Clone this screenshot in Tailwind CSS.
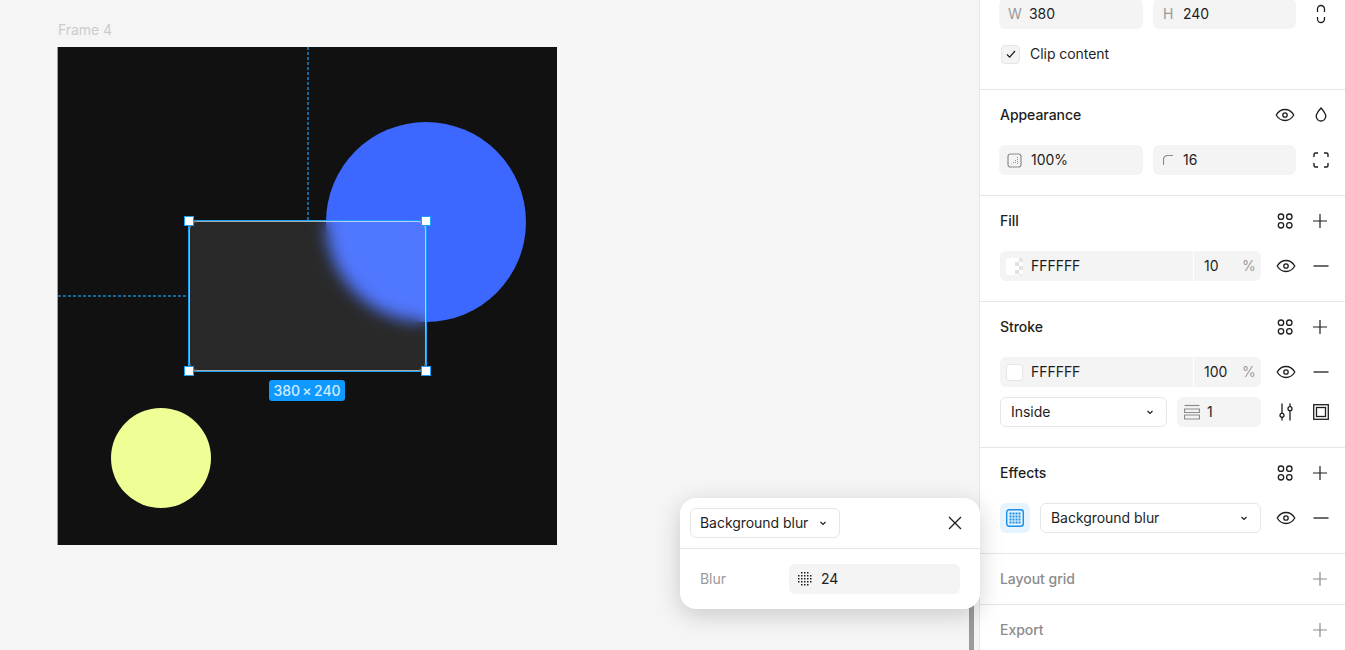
<!DOCTYPE html>
<html lang="en">
<head>
    <meta charset="UTF-8">
    <meta name="viewport" content="width=device-width, initial-scale=1.0">
    <title>Frame 4 - Background blur</title>
    <script src="https://cdn.jsdelivr.net/npm/@tailwindcss/browser@4"></script>
</head>
<body class="font-['Inter',sans-serif] text-[14px] leading-[20px] tracking-[-0.003em] text-[#1e1e1e] bg-[#f5f5f5]">
    <!-- icon sprites -->
    <svg class="hidden">
        <symbol id="eye" viewBox="0 0 20 20"><path d="M1.200 10c2.200-3.700 5.400-5.500 8.800-5.500s6.600 1.800 8.800 5.500c-2.200 3.700-5.400 5.500-8.800 5.500S3.400 13.700 1.200 10Z" fill="none" stroke="currentColor" stroke-width="1.300"/><circle cx="10" cy="10" r="2.200" fill="none" stroke="currentColor" stroke-width="1.300"/></symbol>
        <symbol id="style" viewBox="0 0 20 20"><g fill="none" stroke="currentColor" stroke-width="1.300"><circle cx="6" cy="5.700" r="2.700"/><circle cx="14.300" cy="5.700" r="2.700"/><circle cx="6" cy="14.300" r="2.700"/><circle cx="14.300" cy="14.300" r="2.700"/></g></symbol>
        <symbol id="plus" viewBox="0 0 20 20"><path d="M10 3v14M3 10h14" stroke="currentColor" stroke-width="1.200" fill="none"/></symbol>
        <symbol id="minus" viewBox="0 0 20 20"><path d="M2.500 10h15" stroke="currentColor" stroke-width="1.300" fill="none"/></symbol>
        <symbol id="chevron" viewBox="0 0 10 10"><path d="M2.500 4l2.500 2.500L7.500 4" stroke="currentColor" stroke-width="1.200" fill="none"/></symbol>
    </svg>

    <div class="relative flex w-[1345px] h-[650px] overflow-hidden">
        <!-- canvas -->
        <main class="relative w-[979px] h-full">
            <span class="absolute left-[58px] top-[20px] text-[#cccccc]">Frame 4</span>

            <div class="absolute left-[58px] top-[47px] w-[499px] h-[498px] bg-[#111111] overflow-hidden shadow-[-1px_0_0_#a0a0a0]">
                <div class="absolute left-[268px] top-[75px] w-[200px] h-[200px] rounded-full bg-[#3d68ff]"></div>
                <div class="absolute left-[53px] top-[361px] w-[100px] h-[100px] rounded-full bg-[#efff95]"></div>
                <div class="absolute left-[249px] top-0 w-[2px] h-[174px] bg-[repeating-linear-gradient(to_bottom,#14689f_0_3px,transparent_3px_5px)]"></div>
                <div class="absolute left-0 top-[248px] w-[130px] h-[2px] bg-[repeating-linear-gradient(to_right,#14689f_0_3px,transparent_3px_5px)]"></div>
                <div class="absolute left-[131px] top-[174px] w-[237px] h-[150px] rounded-[8px] bg-white/10 backdrop-blur-[8px] border border-white/60"></div>
            </div>

            <!-- selection -->
            <div class="absolute left-[188px] top-[220px] w-[239px] h-[152px] border-[1.5px] border-[#18a0fb]">
                <i class="absolute -left-[5px] -top-[5px] w-[10px] h-[10px] bg-white border border-[#18a0fb]"></i>
                <i class="absolute -right-[5px] -top-[5px] w-[10px] h-[10px] bg-white border border-[#18a0fb]"></i>
                <i class="absolute -left-[5px] -bottom-[5px] w-[10px] h-[10px] bg-white border border-[#18a0fb]"></i>
                <i class="absolute -right-[5px] -bottom-[5px] w-[10px] h-[10px] bg-white border border-[#18a0fb]"></i>
            </div>
            <div class="absolute left-[269px] top-[380px] w-[76px] h-[21px] rounded-[3px] bg-[#0d99ff] text-white/80 font-medium flex items-center justify-center">380&#8201;×&#8201;240</div>

            <div class="absolute left-[969px] top-[600px] w-[5px] h-[50px] bg-[#9b9b9b]"></div>
        </main>

        <!-- right panel -->
        <aside class="w-[366px] h-full border-l border-[#e6e6e6] bg-white shrink-0">
            <section class="pl-5 border-b border-[#e6e6e6] -mt-[1px] h-[91px]">
                <div class="flex items-center -ml-[1px]">
                    <div class="shrink-0 w-[144px] h-[30px] rounded-[6px] bg-[#f4f4f4] flex items-center pl-[9px]">
                        <span class="w-[21px] text-[#9a9a9a]">W</span><span>380</span>
                    </div>
                    <div class="shrink-0 ml-[10px] w-[143px] h-[30px] rounded-[6px] bg-[#f4f4f4] flex items-center pl-[10px]">
                        <span class="w-[20px] text-[#9a9a9a]">H</span><span>240</span>
                    </div>
                    <svg class="shrink-0 ml-[16px] w-[18px] h-[20px]" viewBox="0 0 18 20" fill="none" stroke="#1e1e1e" stroke-width="1.300"><path d="M5.500 8V5a3.500 3.500 0 0 1 7 0v3M5.500 13v2a3.500 3.500 0 0 0 7 0v-2"/></svg>
                </div>
                <div class="flex items-center mt-[15px] ml-[1px]">
                    <span class="w-[19px] h-[19px] rounded-[4px] bg-[#f4f4f4] border border-[#e6e6e6] flex items-center justify-center">
                        <svg class="w-[12px] h-[12px]" viewBox="0 0 12 12" fill="none" stroke="#1e1e1e" stroke-width="1.200"><path d="M2 6.500l2.700 2.700L10 3"/></svg>
                    </span>
                    <span class="ml-[10px]">Clip content</span>
                </div>
            </section>

            <section class="pl-5 pt-[15px] pb-5 border-b border-[#e6e6e6]">
                <div class="flex items-center h-5">
                    <h2 class="font-medium flex-1">Appearance</h2>
                    <svg class="w-5 h-5 mr-[17px]"><use href="#eye"/></svg>
                    <svg class="w-[18px] h-5 mr-[15px]" viewBox="0 0 18 20" fill="none" stroke="#1e1e1e" stroke-width="1.300"><path d="M9 3c2.800 3.200 4.800 5.700 4.800 8.200a4.800 4.800 0 0 1-9.600 0C4.200 8.700 6.200 6.200 9 3Z"/></svg>
                </div>
                <div class="flex items-center mt-5 -ml-[1px]">
                    <div class="shrink-0 w-[144px] h-[30px] rounded-[6px] bg-[#f4f4f4] flex items-center pl-[8px]">
                        <svg class="w-[15px] h-[15px] text-[#8c8c8c]" viewBox="0 0 15 15" fill="none"><rect x="1" y="1" width="13" height="13" rx="2.500" stroke="currentColor" stroke-width="1.200"/><path d="M10.500 4v7M8.500 7v4M6.500 9v2M4 11h.5" stroke="currentColor" stroke-dasharray="1 1"/></svg>
                        <span class="ml-[9px]">100%</span>
                    </div>
                    <div class="shrink-0 ml-[10px] w-[143px] h-[30px] rounded-[6px] bg-[#f4f4f4] flex items-center pl-[10px]">
                        <svg class="w-[10px] h-[10px]" viewBox="0 0 10 10" fill="none" stroke="#8c8c8c" stroke-width="1.200"><path d="M.5 10V4.500a4 4 0 0 1 4-4H10"/></svg>
                        <span class="ml-[10px]">16</span>
                    </div>
                    <svg class="shrink-0 ml-[16px] w-[18px] h-[18px]" viewBox="0 0 18 18" fill="none" stroke="#1e1e1e" stroke-width="1.400"><path d="M2 6V3.500A1.500 1.500 0 0 1 3.500 2H6M12 2h2.500A1.500 1.500 0 0 1 16 3.500V6M16 12v2.500a1.500 1.500 0 0 1-1.500 1.500H12M6 16H3.500A1.500 1.500 0 0 1 2 14.500V12"/></svg>
                </div>
            </section>

            <section class="pl-5 pt-[15px] pb-5 border-b border-[#e6e6e6]">
                <div class="flex items-center h-5">
                    <h2 class="font-medium flex-1">Fill</h2>
                    <svg class="w-5 h-5 mr-[15px]"><use href="#style"/></svg>
                    <svg class="w-5 h-5 mr-[15px]"><use href="#plus"/></svg>
                </div>
                <div class="flex items-center mt-5">
                    <div class="shrink-0 w-[261px] h-[30px] rounded-[6px] bg-[#f4f4f4] flex items-center pl-[6px]">
                        <span class="w-[17px] h-[17px] flex rounded-[3px] overflow-hidden">
                            <span class="w-[9px] bg-white"></span>
                            <span class="w-[8px] bg-[conic-gradient(#e2e2e2_25%,#ffffff_0_50%,#e2e2e2_0_75%,#ffffff_0)] bg-[length:8px_8px]"></span>
                        </span>
                        <span class="ml-[8px] w-[162px]">FFFFFF</span>
                        <span class="w-[1px] h-[30px] bg-white"></span>
                        <span class="ml-[10px] w-[38px]">10</span>
                        <span class="text-[#9a9a9a]">%</span>
                    </div>
                    <svg class="shrink-0 ml-[15px] w-5 h-5"><use href="#eye"/></svg>
                    <svg class="shrink-0 ml-[15px] w-5 h-5"><use href="#minus"/></svg>
                </div>
            </section>

            <section class="pl-5 pt-[15px] pb-5 border-b border-[#e6e6e6]">
                <div class="flex items-center h-5">
                    <h2 class="font-medium flex-1">Stroke</h2>
                    <svg class="w-5 h-5 mr-[15px]"><use href="#style"/></svg>
                    <svg class="w-5 h-5 mr-[15px]"><use href="#plus"/></svg>
                </div>
                <div class="flex items-center mt-5">
                    <div class="shrink-0 w-[261px] h-[30px] rounded-[6px] bg-[#f4f4f4] flex items-center pl-[6px]">
                        <span class="w-[17px] h-[17px] rounded-[3px] bg-white border border-[#e6e6e6]"></span>
                        <span class="ml-[8px] w-[162px]">FFFFFF</span>
                        <span class="w-[1px] h-[30px] bg-white"></span>
                        <span class="ml-[10px] w-[38px]">100</span>
                        <span class="text-[#9a9a9a]">%</span>
                    </div>
                    <svg class="shrink-0 ml-[15px] w-5 h-5"><use href="#eye"/></svg>
                    <svg class="shrink-0 ml-[15px] w-5 h-5"><use href="#minus"/></svg>
                </div>
                <div class="flex items-center mt-[10px]">
                    <div class="shrink-0 w-[167px] h-[30px] rounded-[6px] border border-[#e6e6e6] flex items-center pl-[10px] pr-[11px]">
                        <span class="flex-1">Inside</span>
                        <svg class="w-[10px] h-[10px]"><use href="#chevron"/></svg>
                    </div>
                    <div class="shrink-0 ml-[10px] w-[84px] h-[30px] rounded-[6px] bg-[#f4f4f4] flex items-center pl-[7px]">
                        <svg class="w-[16px] h-[16px]" viewBox="0 0 16 16" fill="none" stroke="#8c8c8c" stroke-width="1.200"><path d="M.5 1.500h15"/><path d="M.5 5h15v3.500H.5zM.5 11h15v4H.5z"/></svg>
                        <span class="ml-[7px]">1</span>
                    </div>
                    <svg class="shrink-0 ml-[16px] w-[18px] h-[20px]" viewBox="0 0 18 20" fill="none" stroke="#1e1e1e" stroke-width="1.300"><path d="M5 1.500v10M5 15v3.500M13 1.500V5M13 8.500v10"/><circle cx="5" cy="13.300" r="2"/><circle cx="13" cy="6.700" r="2"/></svg>
                    <svg class="shrink-0 ml-[18px] w-[16px] h-[16px]" viewBox="0 0 16 16" fill="none" stroke="#1e1e1e" stroke-width="1.300"><rect x=".7" y=".7" width="14.600" height="14.600"/><rect x="3.500" y="3.500" width="9" height="9"/></svg>
                </div>
            </section>

            <section class="pl-5 pt-[15px] pb-5 border-b border-[#e6e6e6]">
                <div class="flex items-center h-5">
                    <h2 class="font-medium flex-1">Effects</h2>
                    <svg class="w-5 h-5 mr-[15px]"><use href="#style"/></svg>
                    <svg class="w-5 h-5 mr-[15px]"><use href="#plus"/></svg>
                </div>
                <div class="flex items-center mt-5">
                    <div class="shrink-0 w-[30px] h-[30px] rounded-[6px] bg-[#e5f4ff] flex items-center justify-center">
                        <svg class="w-[18px] h-[18px]" viewBox="0 0 18 18"><rect x=".7" y=".7" width="16.600" height="16.600" rx="2.500" fill="#e5f4ff" stroke="#1a8fe8" stroke-width="1.400"/><path d="M4.500 3.500v11M7.500 3.500v11M10.500 3.500v11M13.500 3.500v11" stroke="#1a8fe8" stroke-width="2" stroke-dasharray="2 1" fill="none"/></svg>
                    </div>
                    <div class="shrink-0 ml-[10px] w-[221px] h-[30px] rounded-[6px] border border-[#e6e6e6] flex items-center pl-[10px] pr-[11px]">
                        <span class="flex-1">Background blur</span>
                        <svg class="w-[10px] h-[10px]"><use href="#chevron"/></svg>
                    </div>
                    <svg class="shrink-0 ml-[15px] w-5 h-5"><use href="#eye"/></svg>
                    <svg class="shrink-0 ml-[15px] w-5 h-5"><use href="#minus"/></svg>
                </div>
            </section>

            <section class="pl-5 h-[51px] flex items-center border-b border-[#e6e6e6] text-[#8c8c8c]">
                <h2 class="font-medium flex-1">Layout grid</h2>
                <svg class="w-5 h-5 mr-[15px]"><use href="#plus"/></svg>
            </section>
            <section class="pl-5 h-[50px] flex items-center text-[#8c8c8c]">
                <h2 class="font-medium flex-1">Export</h2>
                <svg class="w-5 h-5 mr-[15px]"><use href="#plus"/></svg>
            </section>
        </aside>

        <!-- effect settings popup -->
        <div class="absolute left-[680px] top-[498px] w-[300px] h-[111px] rounded-[16px] bg-white shadow-[0_6px_24px_rgba(0,0,0,0.18)]">
            <div class="h-[51px] border-b border-[#e6e6e6] flex items-center pl-[10px] pr-[15px]">
                <div class="w-[150px] h-[30px] rounded-[6px] border border-[#e6e6e6] flex items-center pl-[9px]">
                    <span>Background blur</span>
                    <svg class="ml-[10px] w-[10px] h-[10px]"><use href="#chevron"/></svg>
                </div>
                <svg class="ml-auto w-5 h-5" viewBox="0 0 20 20" fill="none" stroke="#1e1e1e" stroke-width="1.300"><path d="M4 4l12 12M16 4L4 16"/></svg>
            </div>
            <div class="flex items-center h-[60px] pl-[20px]">
                <span class="w-[89px] text-[#9a9a9a]">Blur</span>
                <div class="w-[171px] h-[30px] rounded-[6px] bg-[#f4f4f4] flex items-center pl-[9px]">
                    <svg class="w-[14px] h-[14px]" viewBox="0 0 14 14" fill="none" stroke="#1e1e1e" stroke-width="1.500"><path d="M.75 3v8M3.750 0v14M6.750 0v14M9.750 0v14M12.750 3v8" stroke-dasharray="1.500 1.500"/></svg>
                    <span class="ml-[9px]">24</span>
                </div>
            </div>
        </div>
    </div>
</body>
</html>
